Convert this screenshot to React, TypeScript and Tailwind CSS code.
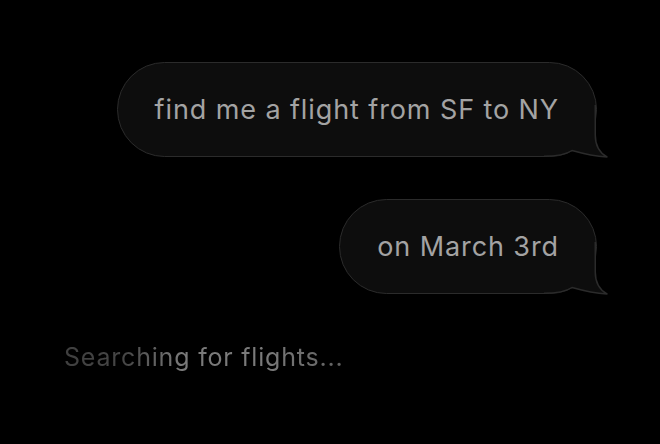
import type { ReactNode } from 'react';

function Bubble({ children }: { children: ReactNode }) {
  return (
    <div className="relative h-[95px] rounded-full border-[1.5px] border-[#2b2b2b] bg-[#0d0d0d] px-[37px] flex items-center">
      <span className="relative z-10 text-[27px] leading-none text-[#a3a3a3] tracking-[0.9px]">{children}</span>
      {/* tail */}
      <svg
        className="absolute right-[-12.5px] bottom-[-1.5px]"
        width="65"
        height="53"
        viewBox="0 0 65 53"
        fill="none"
      >
        <path
          d="M51.25 0 L51.25 30 C51.25 42 56 48 63 52 C55 51.5 44 50 28 45.5 C22 49.5 14 51.25 0 51.25 L0 0 Z"
          fill="#0d0d0d"
        />
        <path
          d="M51.25 0 L51.25 30 C51.25 42 56 48 63 52 C55 51.5 44 50 28 45.5 C22 49.5 14 51.25 0 51.25"
          stroke="#2b2b2b"
          strokeWidth="1.5"
          strokeLinejoin="round"
        />
      </svg>
    </div>
  );
}

export default function App() {
  return (
    <div
      className="w-[660px] h-[444px] bg-black overflow-hidden"
      style={{ fontFamily: 'Inter, "Noto Sans", sans-serif' }}
    >
      <div className="flex flex-col items-end gap-[42px] pt-[62px] pr-[63px]">
        <Bubble>find me a flight from SF to NY</Bubble>
        <Bubble>on March 3rd</Bubble>
      </div>
      <div className="pl-16 mt-[47px]">
        <span className="text-[25px] leading-[32px] tracking-[0.8px] bg-[linear-gradient(90deg,#3f3f3f_0%,#464646_22%,#7a7a7a_42%,#7a7a7a_72%,#606060_100%)] bg-clip-text text-transparent">
          Searching for flights...
        </span>
      </div>
    </div>
  );
}
